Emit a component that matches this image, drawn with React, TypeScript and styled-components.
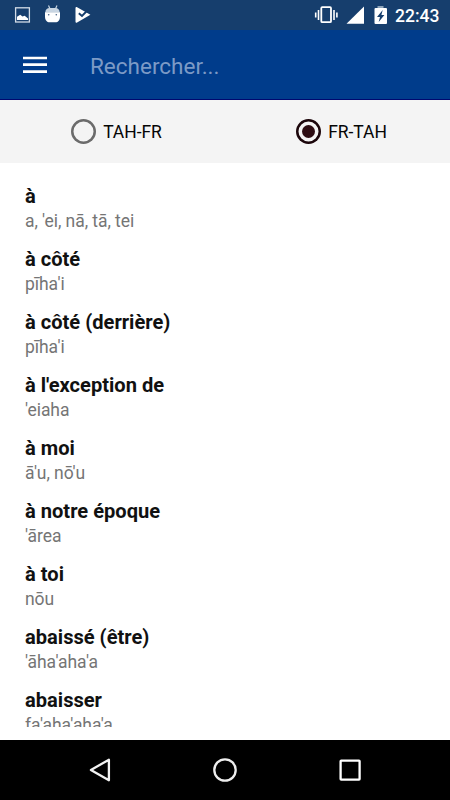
import React, { useState } from 'react';
import styled, { createGlobalStyle } from 'styled-components';

const GlobalStyle = createGlobalStyle`
  * { box-sizing: border-box; }
  body { margin: 0; font-family: Roboto, "Noto Sans", sans-serif; background: #fff; }
`;

const Screen = styled.div`
  display: flex;
  flex-direction: column;
  width: 450px;
  height: 800px;
  overflow: hidden;
  background: #fff;
`;

const StatusBar = styled.div`
  flex: none;
  display: flex;
  justify-content: space-between;
  height: 30px;
  background: #163e6d;
  color: #fff;
`;

const StatusGroup = styled.div`
  display: flex;
`;

const Clock = styled.span`
  width: 55px;
  font-size: 17.5px;
  font-weight: 500;
  line-height: 33px;
`;

const AppBar = styled.header`
  flex: none;
  display: flex;
  align-items: center;
  height: 70px;
  padding: 0 22px;
  background: #003c8b;
  border-bottom: 1px solid #00086f;
`;

const MenuButton = styled.button`
  display: flex;
  width: 26px;
  height: 20px;
  margin: 0 42px 0 0;
  padding: 0;
  border: 0;
  background: none;
`;

const SearchInput = styled.input`
  flex: 1;
  min-width: 0;
  height: 40px;
  margin-top: 2px;
  padding: 0;
  border: 0;
  outline: 0;
  background: none;
  color: #fff;
  font: 400 22.5px Roboto, sans-serif;
  &::placeholder { color: #7c9ac6; opacity: 1; }
`;

const DirectionBar = styled.div`
  flex: none;
  display: grid;
  grid-template-columns: 1fr 1fr;
  height: 62.5px;
  background: #f4f4f4;
`;

const Direction = styled.button`
  display: flex;
  align-items: center;
  justify-content: center;
  gap: 7.5px;
  padding: 0 0 0 7.5px;
  border: 0;
  background: none;
  color: #050505;
  font: 400 17.5px Roboto, sans-serif;
  letter-spacing: -0.05px;
`;

const DirectionLabel = styled.span`
  padding-top: 2px;
`;

const RadioRing = styled.span<{ $checked: boolean }>`
  display: flex;
  align-items: center;
  justify-content: center;
  width: 25px;
  height: 25px;
  border-radius: 50%;
  box-shadow: inset 0 0 0 2.5px ${(p) => (p.$checked ? '#1c060b' : '#6b6b6b')};
  &::after {
    content: '';
    width: 13px;
    height: 13px;
    border-radius: 50%;
    background: ${(p) => (p.$checked ? '#2e0d13' : 'transparent')};
  }
`;

const WordList = styled.main`
  flex: none;
  height: 564.5px;
  padding: 21px 25px 0;
  overflow: hidden;
`;

const Entry = styled.article`
  height: 63px;
`;

const Term = styled.h2`
  margin: 0;
  color: #111;
  font-size: 20.1px;
  font-weight: 700;
  line-height: 25.5px;
  white-space: nowrap;
`;

const Translation = styled.p`
  margin: 0;
  color: #757575;
  font-size: 17.5px;
  letter-spacing: -0.07px;
  line-height: 25.5px;
  white-space: nowrap;
`;

const NavBar = styled.nav`
  flex: none;
  display: flex;
  align-items: center;
  justify-content: center;
  gap: 95px;
  height: 60px;
  margin-top: auto;
  background: #000;
`;

const Icon = styled.svg`
  display: block;
  flex: none;
`;

const entries = [
  ['à', "a, 'ei, nā, tā, tei"],
  ['à côté', "pīha'i"],
  ['à côté (derrière)', "pīha'i"],
  ["à l'exception de", "'eiaha"],
  ['à moi', "ā'u, nō'u"],
  ['à notre époque', "'ārea"],
  ['à toi', 'nōu'],
  ['abaissé (être)', "'āha'aha'a"],
  ['abaisser', "fa'aha'aha'a"],
];

const directions = ['TAH-FR', 'FR-TAH'];

const NotificationIcons = () => (
  <Icon width="100" height="30" viewBox="0 0 100 30">
    <rect x="15.600" y="7.800" width="13.800" height="14.200" fill="none" stroke="#d3dce7" strokeWidth="1.300" />
    <path d="M17 20v-3.200l3.200-2 2.300 1.700 2.200-.7 3.300 2.800V20z" fill="#fff" />
    <path d="M48.500 5.500l1.600 3.500M57 5.500L55.400 9" stroke="#c8d5e2" strokeWidth="1.200" />
    <path d="M45.300 12.500c0-2.800 1.800-4.500 4.300-4.500h5.800c2.500 0 4.300 1.700 4.300 4.500z" fill="#c8d5e2" />
    <path d="M45 12.200h15v4c0 4.200-2 6-4.500 6h-6c-2.500 0-4.500-1.800-4.500-6z" fill="#fff" />
    <circle cx="48.700" cy="14.800" r=".8" fill="#425f83" />
    <circle cx="56.300" cy="14.800" r=".8" fill="#425f83" />
    <path d="M75.500 8c0-1 .8-1.300 1.600-.8l13.300 7.600-13.300 7.800c-.9.500-1.600.1-1.600-.8z" fill="#fff" />
    <path d="M78.800 13.200l3.200 2.800 5.800-6" fill="none" stroke="#163e6d" strokeWidth="1.900" />
  </Icon>
);

const SystemIcons = () => (
  <Icon width="95" height="30" viewBox="300 0 95 30">
    <rect x="321.300" y="7.200" width="9.700" height="15" rx="1" fill="none" stroke="#fff" strokeWidth="1.800" />
    <path d="M318.500 10v10M334 10v10M315.700 12.500v5M336.900 12.500v5" stroke="#fff" strokeWidth="1.600" />
    <path d="M364 6.500v17.300h-17.500z" fill="#fff" />
    <path d="M377.500 6h6v2.500h-6z" fill="#8fa5bb" />
    <rect x="374.500" y="8" width="12.500" height="16" rx="1" fill="#fff" />
    <path d="M382.700 10l-5.700 7h3l-1.300 5 5.700-7h-3z" fill="#163e6d" />
  </Icon>
);

export default function App() {
  const [selected, setSelected] = useState('FR-TAH');
  return (
    <>
      <GlobalStyle />
      <Screen>
        <StatusBar>
          <StatusGroup><NotificationIcons /></StatusGroup>
          <StatusGroup><SystemIcons /><Clock>22:43</Clock></StatusGroup>
        </StatusBar>
        <AppBar>
          <MenuButton aria-label="Menu">
            <Icon width="26" height="20" viewBox="0 0 26 20">
              <path d="M1 3h24M1 9.700h24M1 16.700h24" stroke="#fff" strokeWidth="2.700" />
            </Icon>
          </MenuButton>
          <SearchInput placeholder="Rechercher..." />
        </AppBar>
        <DirectionBar>
          {directions.map((name) => (
            <Direction key={name} onClick={() => setSelected(name)}>
              <RadioRing $checked={selected === name} />
              <DirectionLabel>{name}</DirectionLabel>
            </Direction>
          ))}
        </DirectionBar>
        <WordList>
          {entries.map(([term, translation]) => (
            <Entry key={term}>
              <Term>{term}</Term>
              <Translation>{translation}</Translation>
            </Entry>
          ))}
        </WordList>
        <NavBar>
          <Icon width="30" height="30" viewBox="0 0 30 30">
            <path d="M23.900 4.700v20.600L5.900 15z" fill="none" stroke="#f2f2f2" strokeWidth="2.300" strokeLinejoin="round" />
          </Icon>
          <Icon width="30" height="30" viewBox="0 0 30 30">
            <circle cx="15" cy="15" r="10.700" fill="none" stroke="#eee" strokeWidth="2.300" />
          </Icon>
          <Icon width="30" height="30" viewBox="0 0 30 30">
            <rect x="5.600" y="5.600" width="19" height="19" rx=".6" fill="none" stroke="#fff" strokeWidth="2.300" />
          </Icon>
        </NavBar>
      </Screen>
    </>
  );
}
